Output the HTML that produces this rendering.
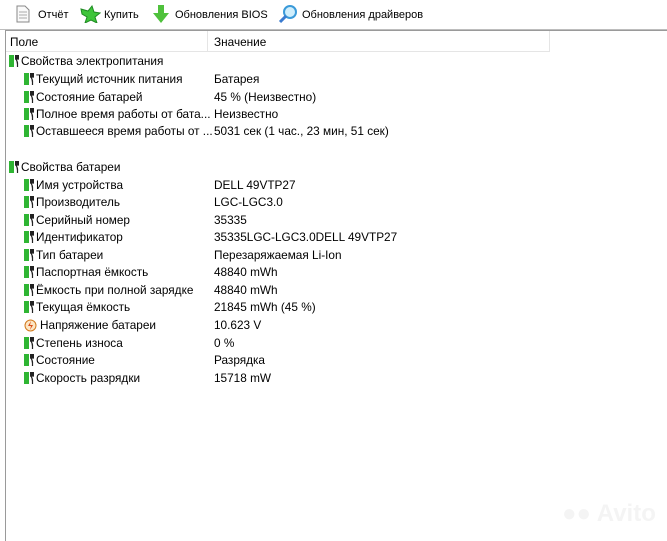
<!DOCTYPE html>
<html><head><meta charset="utf-8"><style>
body{margin:0;width:667px;height:540px;background:#fff;font-family:"Liberation Sans",sans-serif;font-size:11.8px;color:#000;position:relative;overflow:hidden}
.tb{position:absolute;left:0;top:0;width:667px;height:29px;background:#fff;border-bottom:1px solid #bdbdbd}
.tb span{position:absolute;top:9px;font-size:11px}
.panel{position:absolute;left:5px;top:30px;width:662px;height:510px;border-left:1px solid #9a9a9a;border-top:1px solid #9a9a9a}
.hdr{position:absolute;left:6px;top:31px;width:544px;height:20px;border-bottom:1px solid #e5e5e5}
.hdr span{position:absolute;top:4px}
.r{position:absolute;height:16px;white-space:nowrap}
.ic{position:absolute;top:1px;width:5px;height:12px;background:#2fb533}
.pl{position:absolute;top:1px;width:4px;height:12px}
.v{position:absolute;left:214px;white-space:nowrap}
</style></head><body>
<div class="tb">
<svg style="position:absolute;left:16px;top:5px" width="14" height="18"><path d="M1 1h8l4 4v12H1z" fill="#fafafa" stroke="#888"/><path d="M3 7h8M3 10h8M3 13h8" stroke="#aaa"/></svg>
<span style="left:38px">Отчёт</span>
<svg style="position:absolute;left:79px;top:5px" width="22" height="18"><path d="M2 4l7 2 4-5 2 6 6 1-5 4 2 6-6-3-6 3 2-6-5-3z" fill="#3ec53a" stroke="#1f8b23"/></svg>
<span style="left:104px">Купить</span>
<svg style="position:absolute;left:152px;top:4px" width="18" height="20"><path d="M6 1h6v8h5l-8 10-8-10h5z" fill="#4fc13c"/></svg>
<span style="left:175px">Обновления BIOS</span>
<svg style="position:absolute;left:278px;top:4px" width="20" height="20"><circle cx="12" cy="8" r="6" fill="#cfeefc" stroke="#3a9ad9" stroke-width="2"/><path d="M8 12l-6 6" stroke="#3a7bd0" stroke-width="3"/></svg>
<span style="left:302px">Обновления драйверов</span>
</div>
<div class="panel"></div>
<div class="hdr"><span style="left:4px">Поле</span><span style="left:208px">Значение</span><div style="position:absolute;left:201px;top:0;width:1px;height:20px;background:#e5e5e5"></div><div style="position:absolute;left:543px;top:0;width:1px;height:20px;background:#e5e5e5"></div></div>
<div id="rows"></div>
<script>
var R=[[61,0,"Свойства электропитания",""],[79,1,"Текущий источник питания","Батарея"],[97,1,"Состояние батарей","45 % (Неизвестно)"],[114,1,"Полное время работы от бата...","Неизвестно"],[131,1,"Оставшееся время работы от ...","5031 сек (1 час., 23 мин, 51 сек)"],
[167,0,"Свойства батареи",""],[185,1,"Имя устройства","DELL 49VTP27"],[202,1,"Производитель","LGC-LGC3.0"],[220,1,"Серийный номер","35335"],[237,1,"Идентификатор","35335LGC-LGC3.0DELL 49VTP27"],[255,1,"Тип батареи","Перезаряжаемая Li-Ion"],[272,1,"Паспортная ёмкость","48840 mWh"],[290,1,"Ёмкость при полной зарядке","48840 mWh"],[307,1,"Текущая ёмкость","21845 mWh  (45 %)"],[325,2,"Напряжение батареи","10.623 V"],[343,1,"Степень износа","0 %"],[360,1,"Состояние","Разрядка"],[378,1,"Скорость разрядки","15718 mW"]];
var h="";R.forEach(function(r){var y=r[0]-7,x=r[1]?24:9;
var icon=r[1]==2?'<svg style="position:absolute;left:0;top:1px" width="13" height="13"><circle cx="6.5" cy="6.5" r="5.5" fill="#fde6c4" stroke="#d27a1d"/><path d="M7 2L4 7h3l-1 4 3-5H6z" fill="#d9501a"/></svg>':'<div class="ic" style="left:0"></div><svg class="pl" style="left:6px" width="5" height="12"><path d="M0 0v4h5V0M1 0v4M4 0v4M1 4q1.5 3 1.5 4V12" stroke="#222" fill="#222" stroke-width="1.2"/></svg>';
h+='<div class="r" style="left:'+x+'px;top:'+y+'px">'+icon+'<span style="position:absolute;left:'+(r[1]==2?16:12)+'px;top:0">'+r[2]+'</span></div>';
if(r[3])h+='<div class="v" style="top:'+y+'px">'+r[3]+'</div>';});
document.getElementById("rows").innerHTML=h;
</script>
<div style="position:absolute;left:562px;top:500px;font-size:24px;font-weight:bold;color:#f4f4f4;white-space:nowrap">●● Avito</div>
</body></html>
